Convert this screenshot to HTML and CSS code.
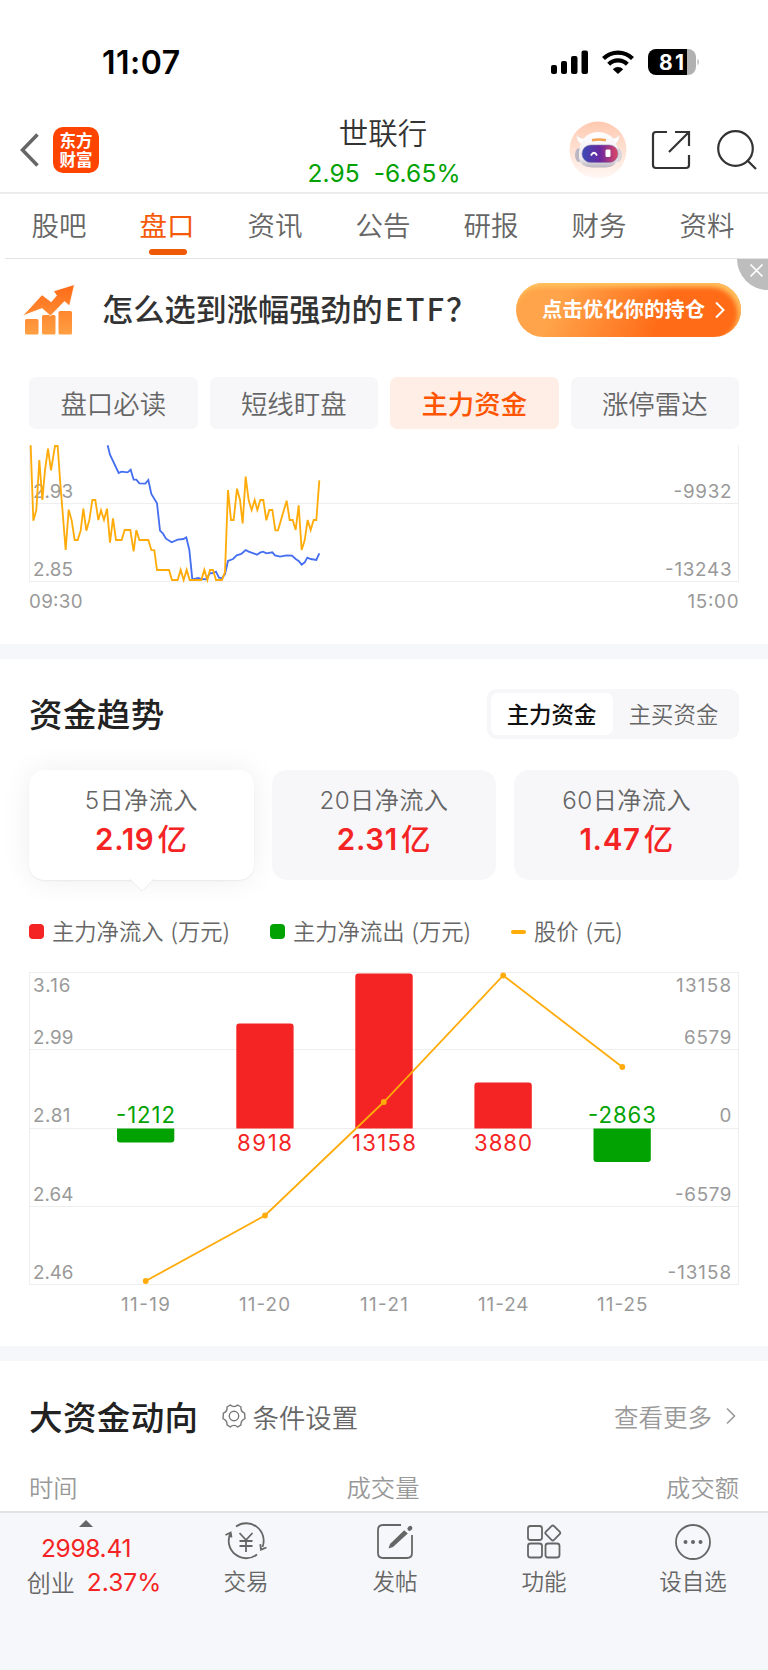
FILE: index.html
```html
<!DOCTYPE html>
<html lang="zh-CN">
<head>
<meta charset="utf-8">
<title>世联行 - 盘口</title>
<link rel="stylesheet" href="styles.css">
</head>
<body>
<div class="status">
  <span class="clock">11:07</span>
  <svg class="status-icons" width="150" height="30" viewBox="0 0 150 30">
    <rect x="1" y="16" width="6" height="9" rx="2"/><rect x="11" y="12" width="6" height="13" rx="2"/><rect x="21" y="7" width="6.500" height="18" rx="2"/><rect x="31.500" y="1.500" width="6.500" height="23.500" rx="2"/>
    <g fill="none" stroke="#000" stroke-width="4.200"><path d="M53.500 9.600a20.500 20.500 0 0 1 29 0"/><path d="M58.700 15.200a13 13 0 0 1 18.600 0"/></g>
    <path d="M62.800 20.200a7.500 7.500 0 0 1 10.400 0L68 25z"/>
    <path d="M106 0h31v26h-31a8 8 0 0 1-8-8V8a8 8 0 0 1 8-8z"/><path fill="#b1b1b1" d="M137 0h1a8 8 0 0 1 8 8v10a8 8 0 0 1-8 8h-1zM147.500 9.500q2.800 3.500 0 7z"/>
    <text class="battery" x="109" y="21" textLength="25">81</text>
  </svg>
</div>
<header class="header">
  <div class="head-left">
    <svg width="20" height="34" viewBox="0 0 20 34"><path d="M17.500 1.500L2.500 17l15 15.500" fill="none" stroke="#666" stroke-width="3.500"/></svg>
    <div class="logo"><span>东方</span><span>财富</span></div>
  </div>
  <div class="head-title"><div class="name">世联行</div><div class="quote"><span>2.95</span><span>-6.65%</span></div></div>
  <div class="head-right">
    <svg width="58" height="58" viewBox="0 0 58 58">
      <defs>
        <linearGradient id="sky" x2="0" y2="1"><stop stop-color="#ffc9b0"/><stop offset="1" stop-color="#fff8f5"/></linearGradient>
        <linearGradient id="visor"><stop stop-color="#394bb7"/><stop offset=".5" stop-color="#6a279f"/><stop offset="1" stop-color="#e04664"/></linearGradient>
        <linearGradient id="shell" x2="0" y2="1"><stop stop-color="#fff"/><stop offset=".75" stop-color="#eeeaf0"/><stop offset="1" stop-color="#b9b4bf"/></linearGradient>
      </defs>
      <circle cx="29" cy="29" r="28.500" fill="url(#sky)"/>
      <path d="M7.500 14q0 6 4 9l6-5q-7 0-10-4zM50.500 14q0 6-4 9l-6-5q7 0 10-4z" fill="#fff" stroke="#eadcda" stroke-width=".6"/>
      <ellipse cx="10" cy="34" rx="4" ry="7" fill="#bdb7c3"/><ellipse cx="49" cy="34" rx="4" ry="7" fill="#ddd5dc"/>
      <path d="M10 32q1-20 19-21 19 1 20 21v5q-2 9-12 9.500H23Q11 46 10 37z" fill="url(#shell)"/>
      <rect x="13" y="24" width="36" height="17.500" rx="8.700" fill="url(#visor)" stroke="#8a7fa8" stroke-width=".6"/>
      <path d="M22 34.500q3-5.500 6 0" fill="none" stroke="#fff" stroke-width="1.800"/><rect x="36.500" y="28.500" width="5" height="7.500" rx="1.200" fill="#fff"/>
      <path d="M23 19.300q7-1.600 14 0" fill="none" stroke="#f3a254" stroke-width="2.600"/>
    </svg>
    <svg width="40" height="40" viewBox="0 0 40 40" fill="none" stroke="#333" stroke-width="2.200"><path d="M16 2H5Q2 2 2 5v30q0 3 3 3h30q3 0 3-3V25M24 2h14v14M38 2L18 22"/></svg>
    <svg class="search" width="40" height="40" viewBox="0 0 40 40" fill="none" stroke="#333" stroke-width="2.200"><circle cx="18.500" cy="18.500" r="17.300"/><path d="M30 30l9 9"/></svg>
  </div>
</header>
<nav class="tabs">
  <span>股吧</span><span class="on">盘口</span><span>资讯</span><span>公告</span><span>研报</span><span>财务</span><span>资料</span>
</nav>
<section class="banner">
  <svg width="54" height="54" viewBox="0 0 54 54">
    <defs><linearGradient id="rise" gradientUnits="userSpaceOnUse" x1="0" y1="2" x2="0" y2="52"><stop stop-color="#ff6a17"/><stop offset="1" stop-color="#ffa044"/></linearGradient></defs>
    <g fill="url(#rise)"><rect x="3" y="36" width="13.500" height="15.500" rx="1.500"/><rect x="20" y="32" width="13.500" height="19.500" rx="1.500"/><rect x="36.500" y="28" width="13.500" height="23.500" rx="1.500"/>
    <path stroke="#fff" stroke-width=".8" d="M.5 33L20 11.800l9.200 7 5.300-6.300-3-4.500L52.500 1.500 47.500 23l-5-4.500L28.500 33 20 25.500z"/></g>
  </svg>
  <span class="slogan">怎么选到涨幅强劲的<span>ETF？</span></span>
  <span class="cta"><b>点击优化你的持仓</b><svg width="12" height="18" viewBox="0 0 12 18"><path d="M2 1.500L9.500 9 2 16.500" fill="none" stroke="#fff" stroke-width="2"/></svg></span>
  <svg class="close" width="31" height="31" viewBox="0 0 31 31"><path d="M0 0h31v31A31 31 0 0 1 0 0z" fill="#bdbdbd"/><path d="M13.500 5.500l12 12m0-12l-12 12" stroke="#fff" stroke-width="1.700"/></svg>
</section>
<div class="pills"><span>盘口必读</span><span>短线盯盘</span><span class="on">主力资金</span><span>涨停雷达</span></div>
<div class="intraday"><svg width="768" height="207" viewBox="0 0 768 207">
  <path class="grid" d="M29.500 9v137M738.500 9v137M29 67.500h710M29 145.500h710"/>
  <g class="axis"><text x="33" y="61.600" textLength="40">2.93</text><text x="33" y="139.700" textLength="40">2.85</text><text x="29" y="172" textLength="53.500">09:30</text>
  <text x="673.500" y="61.600" textLength="58">-9932</text><text x="665" y="139.700" textLength="66.500">-13243</text><text x="687.500" y="172" textLength="51">15:00</text></g>
  <g class="trace" transform="scale(.33333)">
    <polyline stroke="#456ff0" points="323,28 330,56 356,111 364,107 383,109 392,101 401,131 409,131 418,142 436,143 445,132 454,174 471,202 480,284 489,293 498,308 515,319 533,311 550,309 559,304 568,342 577,430 595,426 604,429 618,430 630,412 639,411 648,407 657,425 666,427 675,414 684,375 699,369 710,358 724,354 737,342 746,347 771,356 780,350 789,347 799,352 817,349 825,358 840,362 860,358 876,359 887,369 896,375 905,386 914,379 922,365 932,369 949,372 958,352"/>
    <polyline stroke="#ffab0a" points="92,28 100,254 109,222 118,72 127,192 135,102 144,38 153,103 165,30 173,30 180,130 197,342 206,221 215,253 224,312 233,312 242,284 250,218 259,284 268,252 277,192 286,192 295,252 303,223 312,252 321,218 330,320 339,247 348,312 365,312 374,282 391,282 401,346 409,282 418,312 445,312 454,342 463,343 471,402 507,402 516,432 533,432 542,401 551,432 560,401 569,432 604,432 613,401 622,432 630,402 639,402 648,432 666,432 675,408 684,162 693,252 701,252 711,158 720,192 728,262 737,122 746,193 755,222 764,192 772,222 781,192 790,192 799,253 808,222 817,222 826,283 834,283 860,194 869,252 878,252 887,282 896,208 905,342 914,313 923,252 932,282 941,252 949,252 958,133"/>
  </g>
</svg></div>
<section class="trend">
  <div class="trend-head"><h2>资金趋势</h2><div class="segment"><span class="on">主力资金</span><span>主买资金</span></div></div>
  <div class="cards">
    <div class="card on"><span>5日净流入</span><b>2.19<i>亿</i></b><svg class="tip" width="24" height="13" viewBox="0 0 24 13"><path d="M0 0l12 12L24 0" fill="#fff" stroke="#e9e9e9" stroke-width=".8"/></svg></div>
    <div class="card"><span>20日净流入</span><b>2.31<i>亿</i></b></div>
    <div class="card"><span>60日净流入</span><b>1.47<i>亿</i></b></div>
  </div>
  <div class="legend"><i class="red"></i><span class="in">主力净流入<em>(万元)</em></span><i class="green"></i><span class="out">主力净流出<em>(万元)</em></span><i class="dash"></i><span>股价<em>(元)</em></span></div>
</section>
<svg class="daily" width="768" height="386" viewBox="0 960 768 386">
  <path class="grid" d="M29.500 972.500h709v312h-709zM29 1049.500h710M29 1128.500h710M29 1206.500h710"/>
  <g fill="#f52424"><path d="M236.300 1128.500v-102q0-3 3-3h51.300q3 0 3 3v102zM355.300 1128.500v-152q0-3 3-3h51.400q3 0 3 3v152zM474.400 1128.500v-43q0-3 3-3h51.400q3 0 3 3v43z"/></g>
  <path fill="#02a202" d="M117 1128.500h57.300v11q0 3-3 3H120q-3 0-3-3zM593.500 1128.500h57.300v30.500q0 3-3 3h-51.300q-3 0-3-3z"/>
  <g class="axis"><text x="33" y="992.300" textLength="37.500">3.16</text><text x="33" y="1044" textLength="40.500">2.99</text><text x="33" y="1122.300" textLength="37.500">2.81</text><text x="33" y="1200.500" textLength="40.500">2.64</text><text x="33" y="1278.800" textLength="40.500">2.46</text>
  <text x="676" y="992.300" textLength="55">13158</text><text x="684" y="1044" textLength="47.500">6579</text><text x="719.500" y="1122.300">0</text><text x="675" y="1200.500" textLength="56.500">-6579</text><text x="667.500" y="1278.800" textLength="63.500">-13158</text>
  <text x="121" y="1311" textLength="49">11-19</text><text x="239" y="1311" textLength="51">11-20</text><text x="360" y="1311" textLength="48">11-21</text><text x="478" y="1311" textLength="50.500">11-24</text><text x="597" y="1311" textLength="50.500">11-25</text></g>
  <g class="value"><text class="down" x="116" y="1123" textLength="59">-1212</text><text x="237" y="1151" textLength="55">8918</text><text x="352" y="1151" textLength="64">13158</text><text x="474" y="1151" textLength="58">3880</text><text class="down" x="588" y="1123" textLength="68">-2863</text></g>
  <polyline fill="none" stroke="#ffab0a" stroke-width="1.800" points="145.700,1281 265,1215.500 383.800,1102 503.200,975.500 622.300,1067"/>
  <g fill="#ffab0a"><circle cx="145.700" cy="1281" r="2.900"/><circle cx="265" cy="1215.500" r="2.900"/><circle cx="383.800" cy="1102" r="2.900"/><circle cx="503.200" cy="975.500" r="2.900"/><circle cx="622.300" cy="1067" r="2.900"/></g>
</svg>
<section class="flow">
  <div class="flow-head"><h2>大资金动向</h2>
    <svg class="gear" width="24" height="24" viewBox="0 0 24 24" fill="none" stroke="#777" stroke-width="1.400"><path d="M8.300 1Q9.800 2.600 12 2.600T15.700 1L19 3q-.7 4.500 3.600 6.200l.4 5.400q-4.500 1.800-4 6.200L15.700 23q-1.500-1.600-3.700-1.600T8.300 23L5 20.800q.5-4.400-4-6.200l.4-5.400Q5.700 7.500 5 3z" stroke-linejoin="round"/><circle cx="12" cy="12" r="4.700"/></svg>
    <span class="setting">条件设置</span><span class="more">查看更多</span><svg class="arrow" width="12" height="18" viewBox="0 0 12 18"><path d="M2 1.500L9.500 9 2 16.500" fill="none" stroke="#999" stroke-width="1.600"/></svg></div>
  <div class="columns"><span>时间</span><span>成交量</span><span>成交额</span></div>
</section>
<footer class="bottom">
  <div class="index"><svg width="14" height="7" viewBox="0 0 14 7"><path d="M7 0l7 7H0z" fill="#666"/></svg><span class="points">2998.41</span><div class="change">创业<span>2.37%</span></div></div>
  <div class="action"><svg width="44" height="40" viewBox="0 0 44 40" fill="none" stroke="#666" stroke-width="1.800"><path d="M12 5.500A17.500 17.500 0 0 1 38.500 26M33 33.500A17.500 17.500 0 0 1 6.500 12M1.500 14l5.200-2.500.8 5M42.500 26.500L37 28.700l-.7-5.500M15.500 12l6.500 7 6.500-7M22 19v12M15.500 20h13M15.500 25h13"/></svg><span>交易</span></div>
  <div class="action"><svg width="44" height="40" viewBox="0 0 44 40" fill="none" stroke="#666" stroke-width="1.800"><path d="M28 4H10Q5 4 5 9v23q0 5 5 5h24q5 0 5-5V14"/><path fill="#666" stroke="none" d="M31.200 9.200l3.600 3.200L20 26l-4.500 1.500L17 23z"/><path d="M36.500 7.700l.8-.8" stroke-width="4.200" stroke-linecap="round"/></svg><span>发帖</span></div>
  <div class="action"><svg width="44" height="40" viewBox="0 0 44 40" fill="none" stroke="#666" stroke-width="1.800"><rect x="6" y="5" width="14" height="14" rx="2.500"/><rect x="6" y="22.500" width="14" height="14" rx="2.500"/><rect x="23.500" y="22.500" width="14" height="14" rx="2.500"/><rect x="25" y="6.200" width="11.500" height="11.500" rx="1.800" transform="rotate(45 30.750 12)"/></svg><span>功能</span></div>
  <div class="action"><svg width="44" height="40" viewBox="0 0 44 40"><circle cx="22" cy="21" r="17" fill="none" stroke="#666" stroke-width="1.800"/><g fill="#666"><circle cx="14.500" cy="21" r="2"/><circle cx="22" cy="21" r="2"/><circle cx="29.500" cy="21" r="2"/></g></svg><span>设自选</span></div>
</footer>
</body>
</html>
```
FILE: styles.css
```css
* { box-sizing: border-box; }
body { margin: 0; width: 768px; background: #fff; color: #666; font-family: "Noto Sans CJK SC", sans-serif; font-weight: 350; overflow: hidden; }
svg { display: block; flex: none; }
i, em { font-style: normal; }
h2 { margin: 0; font-size: 33.5px; font-weight: 500; line-height: 47px; letter-spacing: .4px; color: #222; }
.status { height: 107px; padding: 43px 68px 0 102px; display: flex; justify-content: space-between; }
.clock { font: 600 32px/40px Inter, sans-serif; color: #000; letter-spacing: .5px; }
.status-icons { margin-top: 6px; }
.battery { font: 700 21px Inter, sans-serif; fill: #fff; }
.header { height: 87px; display: grid; grid-template-columns: 232px 1fr 232px; border-bottom: 2px solid #eaebec; }
.head-left { display: flex; align-items: center; gap: 13px; padding: 0 0 0 20px; }
.logo { width: 46px; height: 46px; border-radius: 10px; background: #ff4400; color: #fff; font-size: 16.500px; font-weight: 700; padding-top: 4px; display: flex; flex-direction: column; align-items: center; gap: 1px; }
.logo span { line-height: 18px; }
.head-title { text-align: center; padding-top: 5px; }
.name { font-size: 29.500px; line-height: 38px; color: #333; padding-right: 2px; }
.quote { display: flex; justify-content: center; gap: 14px; font: 400 24.500px/36px Inter, sans-serif; letter-spacing: .1px; color: #02a202; margin-top: 5px; }
.head-right { display: flex; align-items: center; gap: 24px; padding: 0 0 0 33px; }
.search { margin-left: 2px; }
.tabs { height: 65px; margin-left: 5px; display: grid; grid-template-columns: repeat(7, 108px); border-bottom: 1px solid #e0e4e6; }
.tabs span { font-size: 27.500px; line-height: 60px; text-align: center; }
.tabs .on { color: #f55a0a; font-weight: 400; }
.tabs .on::after { content: ""; display: block; width: 38px; height: 6px; border-radius: 3px; background: #ee5a05; margin: -5px auto 0; transform: translateX(1px); }
.banner { height: 118px; padding: 24px 27px 0 22px; display: flex; position: relative; }
.slogan { margin: 3px 0 0 26px; font-size: 31.2px; line-height: 44px; font-weight: 500; color: #333; white-space: nowrap; }
.slogan span { letter-spacing: 2px; margin-left: 2px; }
.cta { margin-left: auto; width: 225px; height: 54px; border-radius: 27px; background: linear-gradient(115deg, #ffa44a 20%, #ff6b17 65%); box-shadow: inset -3px 4px 5px #ffc35f; display: flex; align-items: center; padding-left: 26px; gap: 9px; color: #fff; }
.banner > .cta { position: static; margin-right: 0; }
.cta b { font-size: 20.400px; line-height: 30px; font-weight: 700; margin-top: -5px; }
.close { position: absolute; right: 0; top: 0; }
.pills { height: 59px; padding: 0 29px 7px; display: grid; grid-template-columns: repeat(4, 1fr); gap: 12px; }
.pills span { background: #f7f7fa; border-radius: 7px; text-align: center; font-size: 26.400px; line-height: 52px; }
.pills .on { background: #ffeee6; color: #ff5500; font-weight: 500; }
.intraday { height: 222.500px; border-bottom: 15.500px solid #f6f7fa; }
.grid { fill: none; stroke: #eee; stroke-width: 1; }
.axis { font: 400 18.800px Inter, sans-serif; fill: #999; }
.trace polyline { fill: none; stroke-width: 5.500; }
.trend { height: 301.500px; padding: 30px 29px 0; }
.trend-head { height: 81px; display: flex; justify-content: space-between; }
.segment { width: 252px; height: 50px; padding: 4px; background: #f7f7fa; border-radius: 9px; display: grid; grid-template-columns: 1fr 1fr; }
.segment span { font-size: 22.400px; line-height: 40px; padding-right: 1px; text-align: center; }
.segment .on { background: #fff; color: #111; border-radius: 7px; font-weight: 500; }
.cards { display: grid; grid-template-columns: repeat(3, 1fr); gap: 18px; }
.card { position: relative; height: 110px; padding-top: 13px; border-radius: 15px; background: #f7f7fa; text-align: center; display: flex; flex-direction: column; align-items: center; }
.card.on { background: #fff; box-shadow: 0 0 30px rgba(0,0,0,.07), 0 1px 2px rgba(0,0,0,.06); }
.card span { font: 350 24.200px/36px Inter, "Noto Sans CJK SC", sans-serif; letter-spacing: .4px; }
.card b { font: 600 29.500px/40px Inter, "Noto Sans CJK SC", sans-serif; letter-spacing: .7px; color: #f52424; }
.card i { font-weight: 500; font-size: 29.500px; margin-left: 3px; }
.tip { position: absolute; left: 101px; top: 109.500px; }
.legend { height: 34px; margin-top: 35px; display: flex; align-items: center; font-size: 22.300px; line-height: 34px; }
.legend i { width: 15px; height: 15px; border-radius: 4px; margin-right: 8px; }
.legend span { margin-top: -3px; }
.legend em { margin-left: 7px; }
.legend .in, .legend .out { width: 218px; }
.red { background: #f52424; }
.green { background: #02a202; }
.legend .dash { height: 4px; border-radius: 2px; background: #ffab0a; }
.value { font: 400 22.200px Inter, sans-serif; fill: #f52424; }
.value .down { fill: #02a202; }
.flow { height: 165px; border-top: 15.500px solid #f6f7fa; padding: 31px 29px 0; }
.flow-head { height: 48px; display: flex; align-items: center; }
.flow-head h2 { margin-top: -1px; }
.gear { margin-left: 23px; }
.setting { font-size: 26.400px; margin-left: 7px; }
.more { font-size: 24.500px; color: #999; margin: 0 13px 0 auto; }
.arrow { margin-right: 2px; }
.columns { display: grid; grid-template-columns: repeat(3, 1fr); margin-top: 29px; font-size: 24.300px; line-height: 36px; color: #999; }
.columns span:nth-child(2) { text-align: center; padding-right: 2px; }
.columns span:nth-child(3) { text-align: right; }
.bottom { height: 159px; border-top: 2px solid #e1e2e5; background: #f6f7fa; display: grid; grid-template-columns: 172px repeat(4, 149px); }
.index { display: flex; flex-direction: column; align-items: center; padding-top: 7px; }
.points { font: 400 24.500px/36px Inter, sans-serif; letter-spacing: -.3px; color: #f52424; margin-top: 3px; }
.change { display: flex; gap: 12px; font-size: 24px; line-height: 32px; padding-left: 16px; }
.change span { font: 400 24.500px/32px Inter, sans-serif; color: #f52424; }
.action { display: flex; flex-direction: column; align-items: center; padding: 8px 1px 0 0; font-size: 22.500px; line-height: 32px; }
.action span { margin-top: 3px; }
```
